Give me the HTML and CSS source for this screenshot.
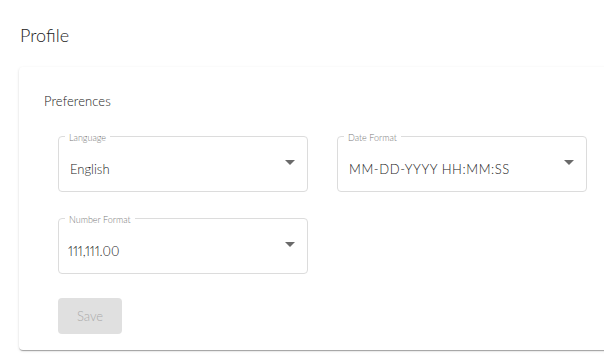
FILE: index.html
```html
<!DOCTYPE html>
<html>
<head>
<meta charset="utf-8">
<link rel="stylesheet" href="styles.css">
</head>
<body>
<div class="page">
  <h1 class="title">Profile</h1>
  <section class="card">
    <h2 class="section-title">Preferences</h2>
    <div class="grid">
      <div class="field">
        <span class="label">Language</span>
        <span class="value">English</span>
        <span class="arrow"></span>
      </div>
      <div class="field">
        <span class="label">Date Format</span>
        <span class="value wide">MM-DD-YYYY HH:MM:SS</span>
        <span class="arrow"></span>
      </div>
      <div class="field">
        <span class="label">Number Format</span>
        <span class="value nums">111,111.00</span>
        <span class="arrow"></span>
      </div>
    </div>
    <button class="save" disabled>Save</button>
  </section>
</div>
</body>
</html>
```
FILE: styles.css
```css
html, body {
  margin: 0;
  padding: 0;
  background: #fff;
}
body {
  font-family: "Lato", "Open Sans", sans-serif;
  font-weight: 300;
  color: #3c3c3c;
  overflow: hidden;
}
.page {
  width: 604px;
  height: 357px;
  overflow: hidden;
  padding: 0 0 0 19px;
  box-sizing: border-box;
}
.title {
  margin: 0;
  padding: 23px 0 0 1px;
  font-size: 18px;
  line-height: 24px;
  font-weight: 300;
  color: #222;
}
.card {
  margin-top: 20px;
  width: 620px;
  box-sizing: border-box;
  padding: 24px 25px 16px 25px;
  border-radius: 4px;
  background: #fff;
  box-shadow: 0 2px 1px -1px rgba(0,0,0,0.2), 0 1px 1px 0 rgba(0,0,0,0.14), 0 1px 3px 0 rgba(0,0,0,0.12);
}
.section-title {
  margin: 0;
  font-size: 13px;
  line-height: 20px;
  font-weight: 300;
  color: #222;
  letter-spacing: 0.1px;
}
.grid {
  margin: 25px 0 0 14px;
  display: grid;
  grid-template-columns: 250px 250px;
  column-gap: 29px;
  row-gap: 26px;
}
.field {
  position: relative;
  height: 56px;
  box-sizing: border-box;
  border: 1px solid #dcdcdc;
  border-radius: 4px;
  display: flex;
  align-items: flex-start;
  padding: 0 12px 0 11px;
}
.label {
  position: absolute;
  top: -4px;
  left: 6px;
  padding: 0 4px;
  background: #fff;
  font-size: 9px;
  line-height: 10px;
  color: #7a7a7a;
}
.value {
  flex: 1;
  margin-top: 23px;
  font-size: 13px;
  line-height: 18px;
  color: #222;
}
.value.wide {
  letter-spacing: 0.6px;
}
.value.nums {
  font-variant-numeric: proportional-nums;
  margin-left: -2px;
}
.arrow {
  margin-top: 23px;
  width: 0;
  height: 0;
  border-left: 5px solid transparent;
  border-right: 5px solid transparent;
  border-top: 5px solid #6a6a6a;
}
.save {
  display: block;
  margin: 24px 0 0 14px;
  width: 64px;
  height: 36px;
  border: none;
  border-radius: 4px;
  background: #e0e0e0;
  color: #ababab;
  font-family: inherit;
  font-weight: 300;
  font-size: 13px;
}
```
